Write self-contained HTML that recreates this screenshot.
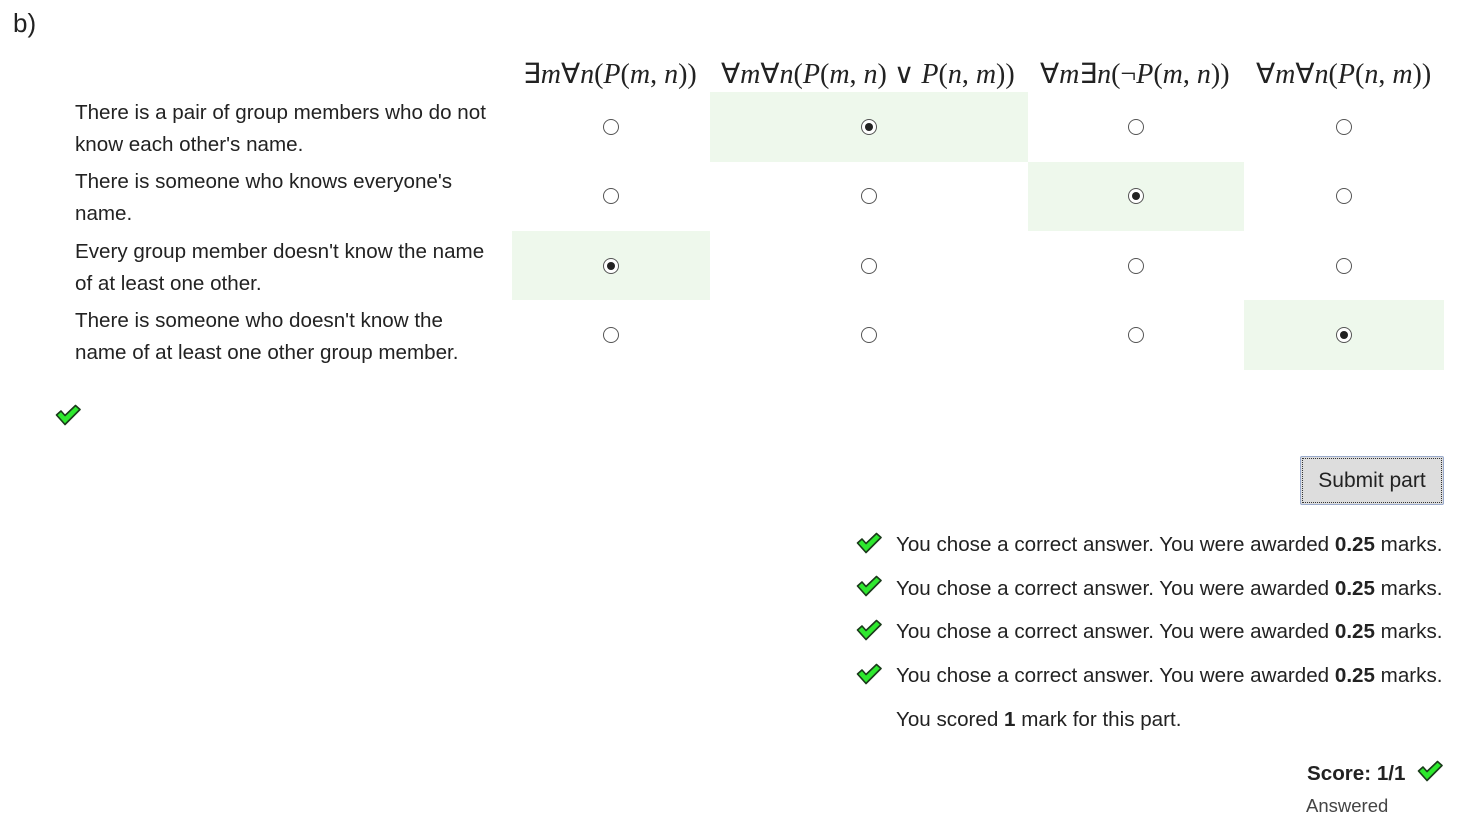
<!DOCTYPE html>
<html><head><style>
body{margin:0;width:1469px;height:834px;background:#fff;font-family:"Liberation Sans",sans-serif;color:#222;position:relative;overflow:hidden}
.a{position:absolute;white-space:nowrap}
.t{font-size:20.6px;letter-spacing:0;line-height:32px}
.m{font-family:"Liberation Serif",serif;font-size:28px;letter-spacing:0}
.m i{font-style:italic}
.g{position:absolute;background:#eef8ec}
.r{position:absolute;width:16px;height:16px;border:1px solid #555;border-radius:50%;box-sizing:border-box;background:#fff}
.r.on::after{content:"";position:absolute;left:3px;top:3px;width:8px;height:8px;border-radius:50%;background:#222}
.ck{position:absolute;width:26px;height:22px}
</style></head><body>
<div class="a" style="left:13px;top:8px;font-size:26px;">b)</div>
<div class="a m" style="left:523px;top:57px">∃<i>m</i>∀<i>n</i>(<i>P</i>(<i>m</i>, <i>n</i>))</div>
<div class="a m" style="left:721px;top:57px">∀<i>m</i>∀<i>n</i>(<i>P</i>(<i>m</i>, <i>n</i>) ∨ <i>P</i>(<i>n</i>, <i>m</i>))</div>
<div class="a m" style="left:1040px;top:57px">∀<i>m</i>∃<i>n</i>(¬<i>P</i>(<i>m</i>, <i>n</i>))</div>
<div class="a m" style="left:1256px;top:57px">∀<i>m</i>∀<i>n</i>(<i>P</i>(<i>n</i>, <i>m</i>))</div>

<div class="g" style="left:710px;top:92px;width:318px;height:70px"></div>
<div class="g" style="left:1028px;top:162px;width:216px;height:69px"></div>
<div class="g" style="left:512px;top:231px;width:198px;height:69px"></div>
<div class="g" style="left:1244px;top:300px;width:200px;height:70px"></div>

<div class="a t" style="left:75px;top:97px">There is a pair of group members who do not<br>know each other's name.</div>
<div class="a t" style="left:75px;top:166px">There is someone who knows everyone's<br>name.</div>
<div class="a t" style="left:75px;top:236px">Every group member doesn't know the name<br>of at least one other.</div>
<div class="a t" style="left:75px;top:305px">There is someone who doesn't know the<br>name of at least one other group member.</div>

<div class="r" style="left:603px;top:119px"></div><div class="r on" style="left:861px;top:119px"></div><div class="r" style="left:1128px;top:119px"></div><div class="r" style="left:1336px;top:119px"></div>
<div class="r" style="left:603px;top:188px"></div><div class="r" style="left:861px;top:188px"></div><div class="r on" style="left:1128px;top:188px"></div><div class="r" style="left:1336px;top:188px"></div>
<div class="r on" style="left:603px;top:258px"></div><div class="r" style="left:861px;top:258px"></div><div class="r" style="left:1128px;top:258px"></div><div class="r" style="left:1336px;top:258px"></div>
<div class="r" style="left:603px;top:327px"></div><div class="r" style="left:861px;top:327px"></div><div class="r" style="left:1128px;top:327px"></div><div class="r on" style="left:1336px;top:327px"></div>

<svg width="0" height="0" style="position:absolute"><defs><symbol id="c" viewBox="0 0 26 22"><path d="M1.5 11 L6 7 L10 11.5 L20.5 1.5 L25 5.5 L10 20.5 Z" fill="#2ee82e" stroke="#1a3a1a" stroke-width="1.6" stroke-linejoin="round"/></symbol></defs></svg>
<svg class="ck" style="left:55px;top:404px"><use href="#c"/></svg>

<div class="a" style="left:1300px;top:456px;width:142px;height:47px;background:#ddd;border:1px solid #9ac;border-radius:2px;outline:1px dotted #333;outline-offset:-3px;font-size:21px;line-height:47px;text-align:center">Submit part</div>

<svg class="ck" style="left:856px;top:532px"><use href="#c"/></svg>
<svg class="ck" style="left:856px;top:575px"><use href="#c"/></svg>
<svg class="ck" style="left:856px;top:619px"><use href="#c"/></svg>
<svg class="ck" style="left:856px;top:663px"><use href="#c"/></svg>
<div class="a t" style="left:896px;top:529px">You chose a correct answer. You were awarded <b>0.25</b> marks.</div>
<div class="a t" style="left:896px;top:573px">You chose a correct answer. You were awarded <b>0.25</b> marks.</div>
<div class="a t" style="left:896px;top:616px">You chose a correct answer. You were awarded <b>0.25</b> marks.</div>
<div class="a t" style="left:896px;top:660px">You chose a correct answer. You were awarded <b>0.25</b> marks.</div>
<div class="a t" style="left:896px;top:704px">You scored <b>1</b> mark for this part.</div>

<div class="a t" style="left:1307px;top:758px;font-weight:bold">Score: 1/1</div>
<svg class="ck" style="left:1417px;top:760px"><use href="#c"/></svg>
<div class="a" style="left:1306px;top:795px;font-size:18.5px;color:#444">Answered</div>
</body></html>
